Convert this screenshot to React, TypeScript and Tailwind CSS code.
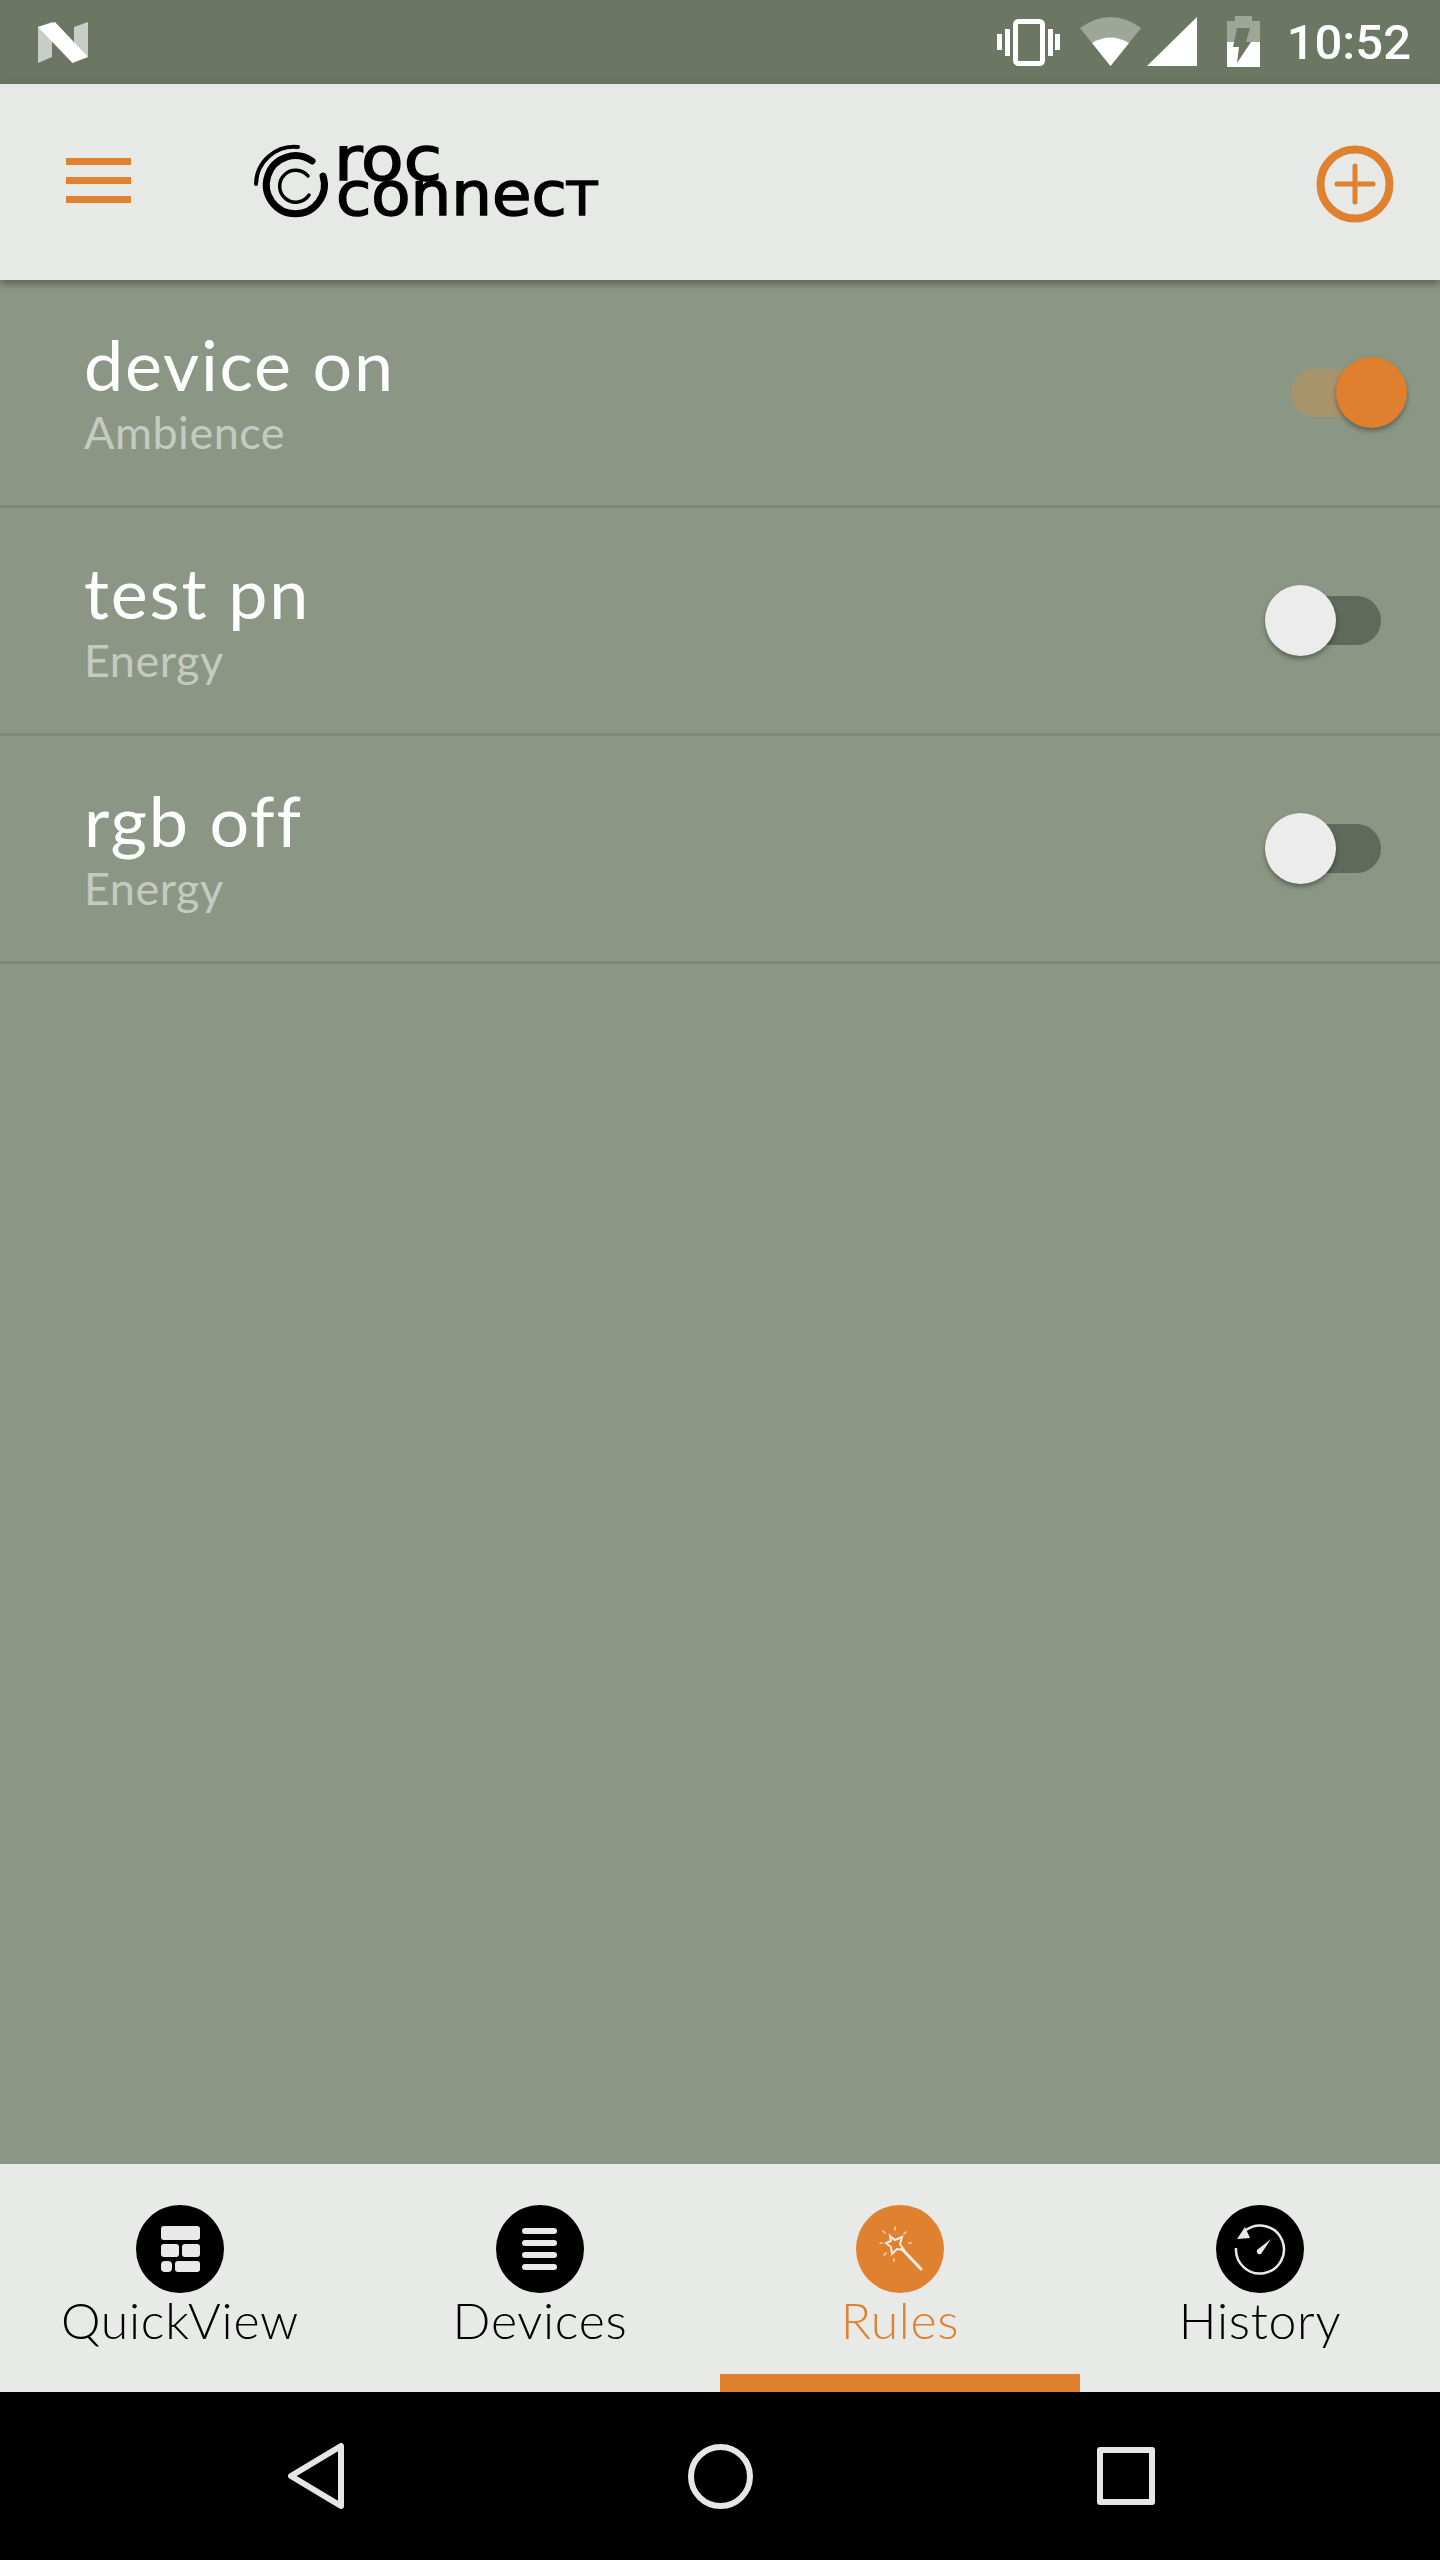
const rules = [
  { name: 'device on', group: 'Ambience', on: true },
  { name: 'test pn', group: 'Energy', on: false },
  { name: 'rgb off', group: 'Energy', on: false },
];

function StatusIcons() {
  return (
    <div className="flex items-start">
      {/* vibrate */}
      <svg width="63" height="47" viewBox="0 0 63 47" className="mt-[19px]" fill="#fff">
        <rect x="0" y="15" width="5" height="16" />
        <rect x="8" y="10" width="5" height="27" />
        <rect x="18.500" y="2.500" width="27" height="42" rx="3" fill="none" stroke="#fff" strokeWidth="5" />
        <rect x="51" y="10" width="5" height="27" />
        <rect x="58" y="15" width="5" height="16" />
      </svg>
      {/* wifi */}
      <svg width="61" height="49" viewBox="0 0 61 49" className="ml-[20px] mt-[17px]">
        <path d="M0 11 Q30.500 -11 61 11 L30.500 49 Z" fill="#fff" fillOpacity="0.35" />
        <path d="M12 26 Q30.500 15 49 26 L30.500 49 Z" fill="#fff" />
      </svg>
      {/* signal */}
      <svg width="50" height="49" viewBox="0 0 50 49" className="ml-[6px] mt-[17px]">
        <path d="M0 49 L50 0 L50 49 Z" fill="#fff" />
      </svg>
      {/* battery charging */}
      <svg width="33" height="51" viewBox="0 0 33 51" className="ml-[30px] mt-[16px]">
        <path d="M8 0 H25 V5 H33 V26 H0 V5 H8 Z" fill="#fff" fillOpacity="0.35" />
        <rect x="0" y="26" width="33" height="25" fill="#fff" />
        <path d="M10 12 H23 L19 26 H24 L10 47 L12 31 H6 Z" fill="#6b7762" />
      </svg>
      <span className="ml-[27px] mt-[14px] font-['Roboto',sans-serif] text-[49px] font-medium leading-[58px] text-white">
        10:52
      </span>
    </div>
  );
}

function Logo() {
  return (
    <svg width="346" height="130" viewBox="0 0 346 130" className="ml-[124px] mt-[2px] overflow-visible">
      <path d="M1 66 A38 38 0 0 1 43 29" fill="none" stroke="#000" strokeWidth="4" strokeLinecap="round" />
      <path d="M57 43 A29 29 0 1 0 68 58" fill="none" stroke="#000" strokeWidth="7" strokeLinecap="round" />
      <path d="M53 58 A16 16 0 1 0 54 77" fill="none" stroke="#000" strokeWidth="3.500" strokeLinecap="round" />
      <text
        transform="translate(79 62) scale(1.16 1)"
        fontFamily="DejaVu Sans, sans-serif"
        fontSize="60"
        stroke="#000"
        strokeWidth="1.500"
      >
        roc
      </text>
      <text
        transform="translate(81 97) scale(1.07 1)"
        fontFamily="DejaVu Sans, sans-serif"
        fontSize="60"
        stroke="#000"
        strokeWidth="1.500"
      >
        connec<tspan fontSize="47">T</tspan>
      </text>
    </svg>
  );
}

function Toggle({ on }: { on: boolean }) {
  if (on) {
    return (
      <div className="relative mr-[59px] h-[48px] w-[90px] rounded-full bg-[#a8946b]">
        <div className="absolute right-[-26px] top-[-12px] h-[71px] w-[71px] rounded-full bg-[#e0802e] shadow-[0_3px_5px_rgba(0,0,0,0.35)]" />
      </div>
    );
  }
  return (
    <div className="relative mr-[59px] h-[49px] w-[91px] rounded-full bg-[#5f6a5b]">
      <div className="absolute left-[-25px] top-[-11px] h-[71px] w-[71px] rounded-full bg-[#ececec] shadow-[0_3px_5px_rgba(0,0,0,0.35)]" />
    </div>
  );
}

function QuickViewIcon() {
  return (
    <svg width="88" height="88" viewBox="0 0 88 88">
      <circle cx="44" cy="44" r="44" fill="#000" />
      <g fill="#e8eae8">
        <rect x="25" y="21" width="39" height="14" rx="3" />
        <rect x="25" y="39" width="18" height="13" rx="3" />
        <rect x="46" y="39" width="18" height="13" rx="3" />
        <rect x="25" y="56" width="11" height="11" rx="4" />
        <rect x="39" y="56" width="25" height="11" rx="3" />
      </g>
    </svg>
  );
}

function DevicesIcon() {
  return (
    <svg width="88" height="88" viewBox="0 0 88 88">
      <circle cx="44" cy="44" r="44" fill="#000" />
      <g fill="#e8eae8">
        <rect x="26" y="23" width="35" height="6" rx="3" />
        <rect x="26" y="35" width="35" height="6" rx="3" />
        <rect x="26" y="47" width="35" height="6" rx="3" />
        <rect x="26" y="59" width="35" height="6" rx="3" />
      </g>
    </svg>
  );
}

function RulesIcon() {
  return (
    <svg width="88" height="88" viewBox="0 0 88 88">
      <circle cx="44" cy="44" r="44" fill="#e0812f" />
      <path d="M46 44 L65 64" stroke="#f7efe4" strokeWidth="3" strokeLinecap="round" />
      <path
        d="M34 31 L39 35 L46 32 L44 39 L48 45 L41 44 L36 49 L35 42 L30 38 L35 36 Z"
        fill="none"
        stroke="#f7efe4"
        strokeWidth="2"
      />
      <g stroke="#f3dcc0" strokeWidth="1.500" strokeLinecap="round">
        <path d="M39 22 V25" />
        <path d="M27 26 L29 28" />
        <path d="M50 27 L48 29" />
        <path d="M24 38 H26" />
        <path d="M53 38 H55" />
        <path d="M28 50 L30 48" />
        <path d="M38 54 V56" />
        <path d="M50 49 L51 50" />
      </g>
    </svg>
  );
}

function HistoryIcon() {
  return (
    <svg width="88" height="88" viewBox="0 0 88 88">
      <circle cx="44" cy="44" r="44" fill="#000" />
      <path d="M30 25 A24 24 0 1 1 20 43" fill="none" stroke="#e8eae8" strokeWidth="2.500" />
      <path d="M21 34 L29 22 L34 33 Z" fill="#e8eae8" />
      <path d="M55 34 L45 49 Q40 50 41 45 Z" fill="#e8eae8" />
    </svg>
  );
}

const tabs = [
  { label: 'QuickView', icon: <QuickViewIcon />, active: false },
  { label: 'Devices', icon: <DevicesIcon />, active: false },
  { label: 'Rules', icon: <RulesIcon />, active: true },
  { label: 'History', icon: <HistoryIcon />, active: false },
];

export default function App() {
  return (
    <div className="flex h-[2560px] w-[1440px] flex-col bg-[#8b9784] font-['Lato',sans-serif]">
      {/* status bar */}
      <div className="flex h-[84px] shrink-0 items-start justify-between bg-[#6b7762] pl-[38px] pr-[29px]">
        <svg width="50" height="41" viewBox="0 0 50 41" className="mt-[22px]">
          <path d="M0 5 L14 0 V35 L0 41 Z" fill="#c8cdc8" />
          <path d="M36 5 L50 0 V35 L36 25 Z" fill="#c8cdc8" />
          <path d="M0 5 L17 0 L50 35 L34.500 41 Z" fill="#fff" />
        </svg>
        <StatusIcons />
      </div>

      {/* app bar */}
      <div className="relative z-10 flex h-[196px] shrink-0 items-center bg-[#e6e9e6] pl-[66px] pr-[46px] shadow-[0_4px_8px_rgba(0,0,0,0.35)]">
        <div className="mt-[-3px] flex w-[65px] flex-col gap-[12px]">
          <div className="h-[7px] bg-[#e0812f]" />
          <div className="h-[7px] bg-[#e0812f]" />
          <div className="h-[7px] bg-[#e0812f]" />
        </div>
        <Logo />
        <svg width="78" height="78" viewBox="0 0 78 78" className="ml-auto mt-[3px]">
          <circle cx="39" cy="39" r="34.500" fill="none" stroke="#e0812f" strokeWidth="8" />
          <path d="M39 21 V57 M21 39 H57" stroke="#e0812f" strokeWidth="5" strokeLinecap="round" />
        </svg>
      </div>

      {/* rules */}
      <div className="flex-1">
        {rules.map((rule) => (
          <div
            key={rule.name}
            className="flex h-[228px] items-center justify-between border-b-[3px] border-[#7d8977] pl-[84px]"
          >
            <div className="mt-[-2px] flex flex-col gap-[10px]">
              <span className="text-[70px] font-normal leading-[70px] tracking-[1.8px] text-white">{rule.name}</span>
              <span className="text-[45px] font-normal leading-[46px] tracking-[0.5px] text-[#c5cbc1]">
                {rule.group}
              </span>
            </div>
            <Toggle on={rule.on} />
          </div>
        ))}
      </div>

      {/* tabs */}
      <div className="flex h-[228px] shrink-0 bg-[#e8eae8]">
        {tabs.map((tab) => (
          <div
            key={tab.label}
            className={`flex w-[360px] flex-col items-center pt-[41px] ${
              tab.active ? 'border-b-[18px] border-[#e0812f]' : ''
            }`}
          >
            {tab.icon}
            <span
              className={`mt-[-2px] text-[50px] font-light leading-[58px] tracking-[0.7px] ${
                tab.active ? 'text-[#e0812f]' : 'text-black'
              }`}
            >
              {tab.label}
            </span>
          </div>
        ))}
      </div>

      {/* android nav */}
      <div className="flex h-[168px] shrink-0 items-center bg-black">
        <svg width="58" height="68" viewBox="0 0 58 68" className="ml-[287px]">
          <path d="M54 4 V64 L4 34 Z" fill="none" stroke="#e6e6e6" strokeWidth="6" strokeLinejoin="round" />
        </svg>
        <div className="ml-[343px] h-[65px] w-[65px] rounded-full border-[6px] border-[#e6e6e6]" />
        <div className="ml-[344px] h-[58px] w-[58px] rounded-[3px] border-[6px] border-[#e6e6e6]" />
      </div>
    </div>
  );
}
